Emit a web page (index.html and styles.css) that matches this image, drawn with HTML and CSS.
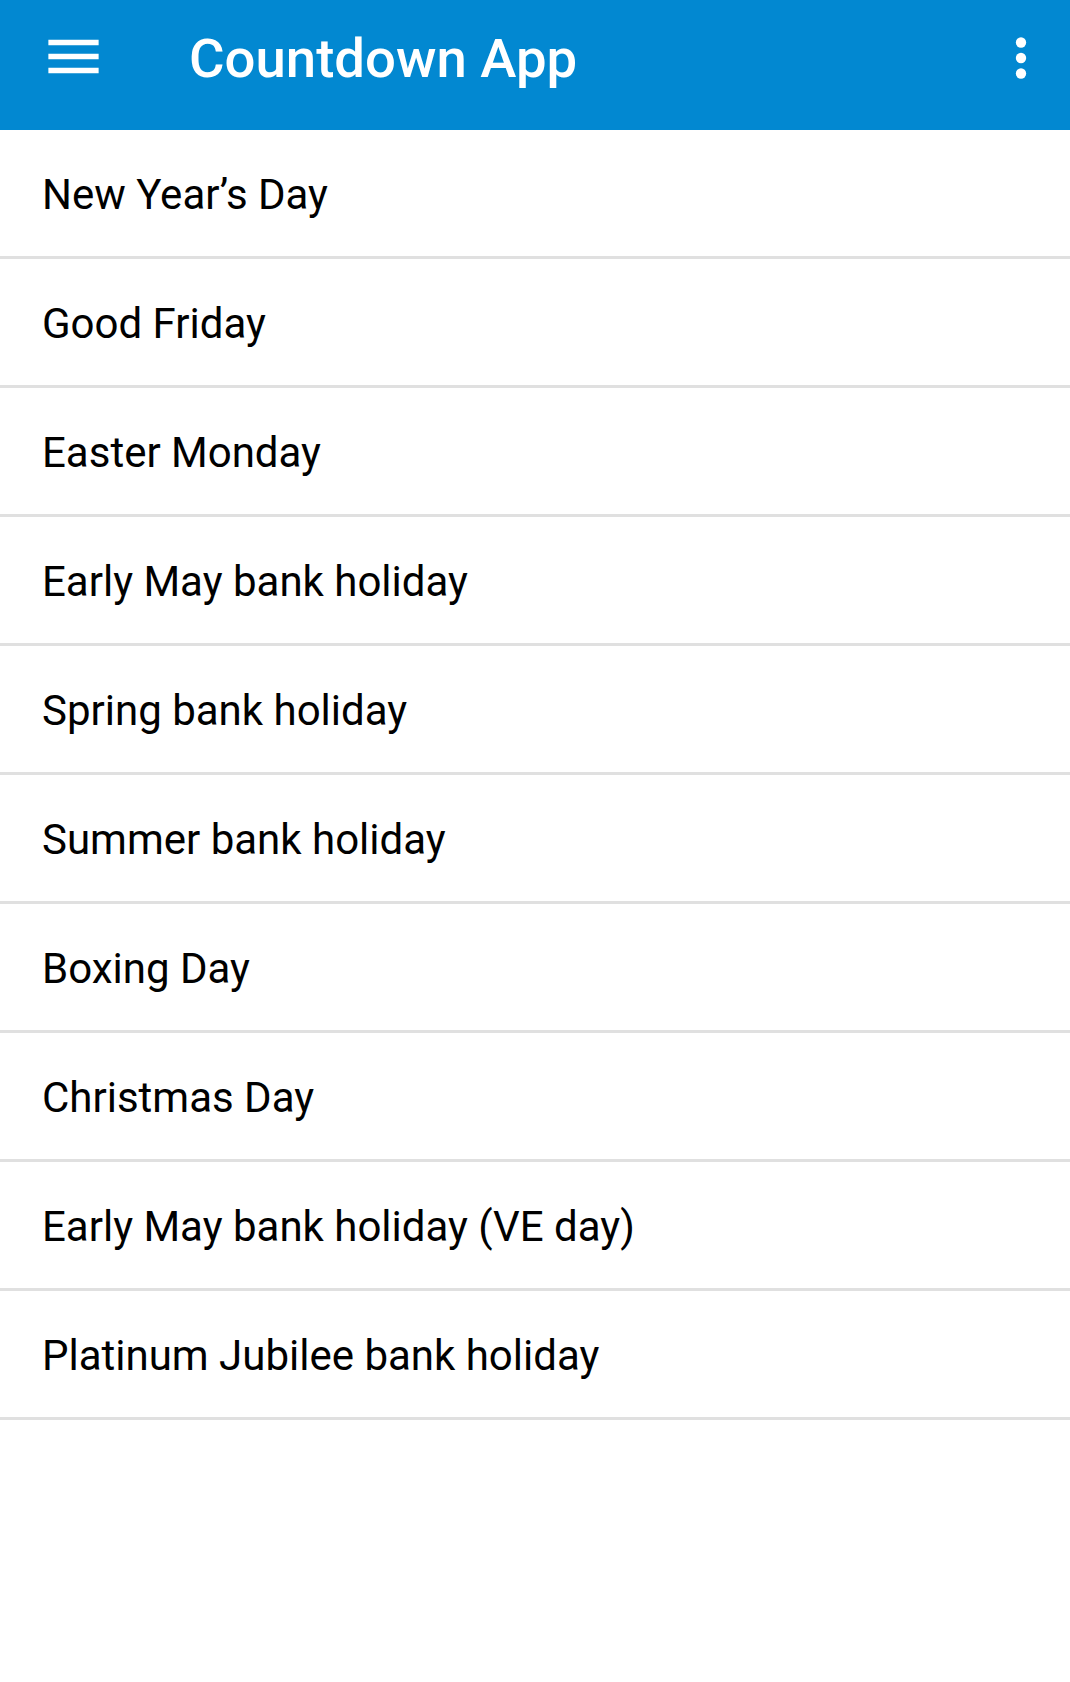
FILE: index.html
```html
<!DOCTYPE html>
<html lang="en">
<head>
<meta charset="utf-8">
<title>Countdown App</title>
<link rel="stylesheet" href="styles.css">
</head>
<body>
<header class="appbar">
  <div class="toolbar">
    <svg class="menu-icon" viewBox="0 0 24 24" aria-hidden="true"><path d="M3 18h18v-2H3v2zm0-5h18v-2H3v2zm0-7v2h18V6H3z" fill="#fff"/></svg>
    <h1 class="title">Countdown App</h1>
    <svg class="more-icon" viewBox="0 0 24 24" aria-hidden="true"><circle cx="12" cy="6" r="2" fill="#fff"/><circle cx="12" cy="12" r="2" fill="#fff"/><circle cx="12" cy="18" r="2" fill="#fff"/></svg>
  </div>
</header>
<ul class="list">
  <li class="item">New Year’s Day</li>
  <li class="item">Good Friday</li>
  <li class="item">Easter Monday</li>
  <li class="item">Early May bank holiday</li>
  <li class="item">Spring bank holiday</li>
  <li class="item">Summer bank holiday</li>
  <li class="item">Boxing Day</li>
  <li class="item">Christmas Day</li>
  <li class="item">Early May bank holiday (VE day)</li>
  <li class="item">Platinum Jubilee bank holiday</li>
</ul>
</body>
</html>
```
FILE: styles.css
```css
html, body {
  margin: 0;
  padding: 0;
  background: #ffffff;
}
body {
  font-family: Roboto, "Liberation Sans", sans-serif;
  color: #000000;
}
.appbar {
  background: #0288d1;
  height: 130px;
  box-sizing: border-box;
  padding-bottom: 18px;
}
.toolbar {
  height: 112px;
  display: flex;
  align-items: center;
  padding-left: 40px;
  padding-right: 18px;
}
.menu-icon {
  width: 67px;
  height: 67px;
  flex: none;
}
.title {
  margin: 5px 0 0 82px;
  flex: 1;
  font-size: 54.5px;
  font-weight: 500;
  color: #ffffff;
  line-height: 1;
}
.more-icon {
  width: 62px;
  height: 62px;
  margin-top: 4px;
  flex: none;
}
.list {
  list-style: none;
  margin: 0;
  padding: 0;
}
.item {
  height: 129px;
  box-sizing: border-box;
  display: flex;
  align-items: center;
  padding-left: 42px;
  padding-top: 2px;
  border-bottom: 3px solid #e0e0e0;
  font-size: 42px;
  font-weight: 400;
}
```
